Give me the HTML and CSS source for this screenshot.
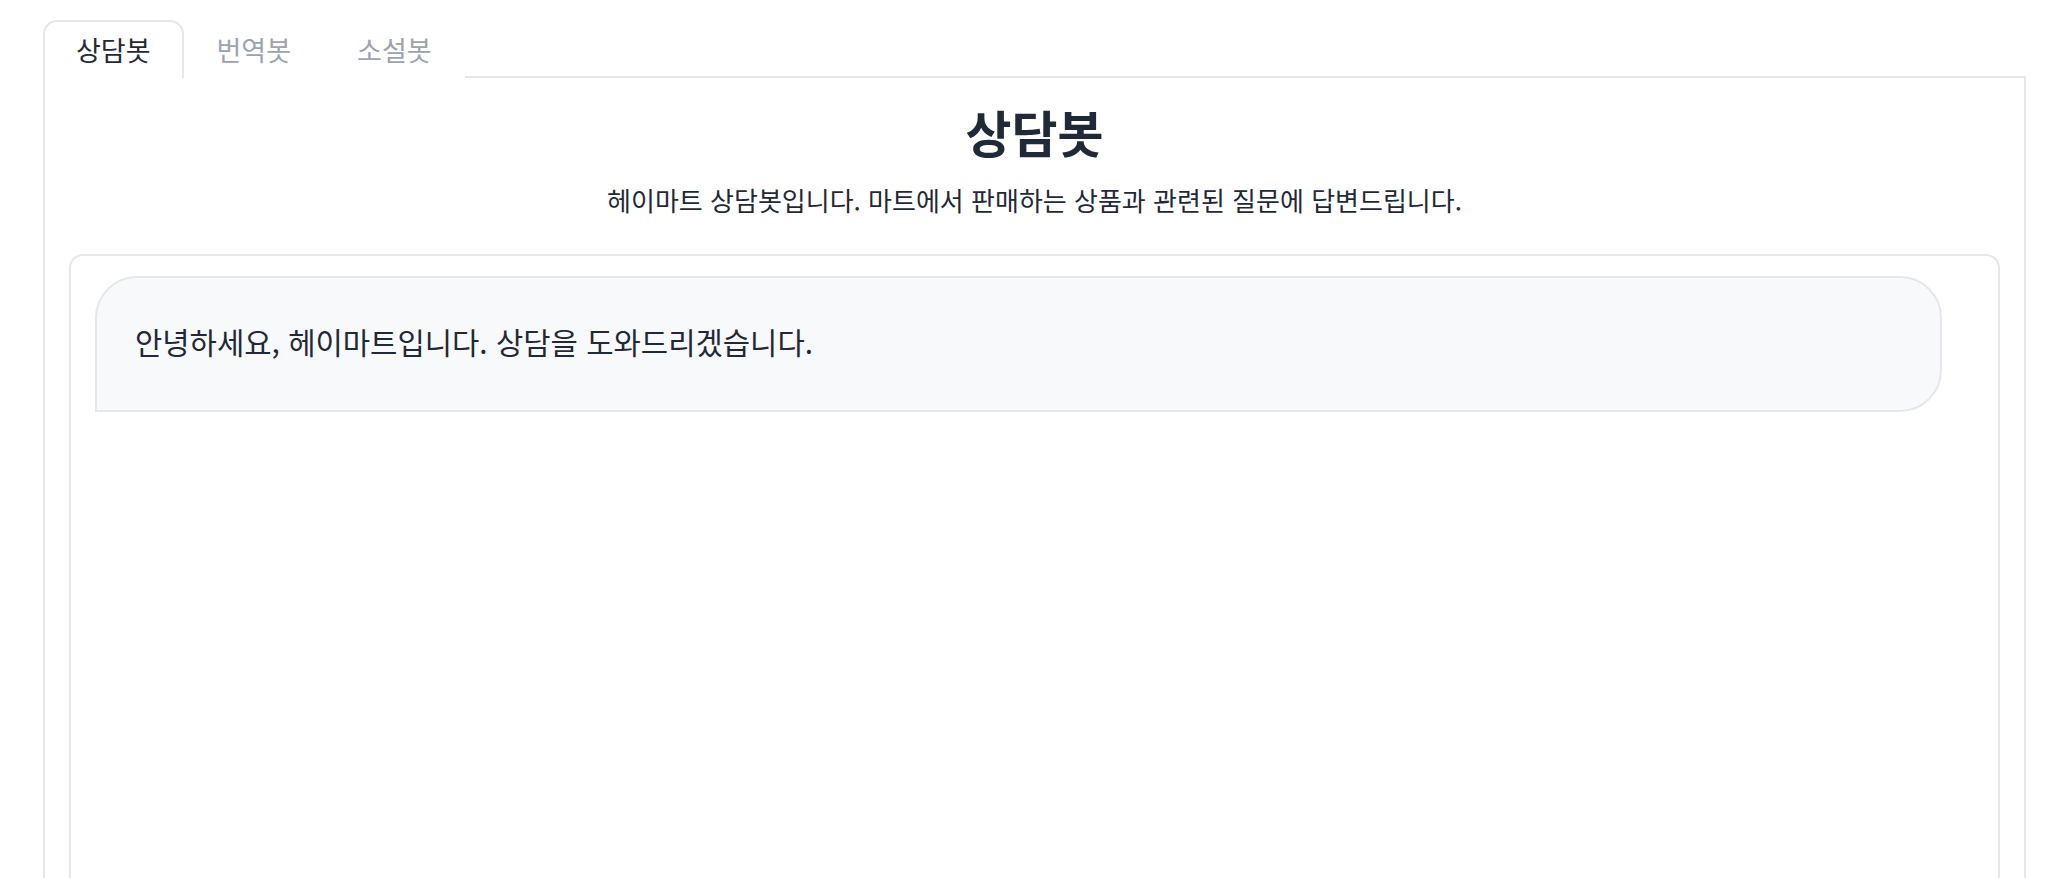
FILE: index.html
```html
<!DOCTYPE html>
<html lang="ko">

<head>
    <title>헤이마트 상담봇</title>
    <link rel="stylesheet" href="styles.css">
</head>

<body>
    <div class="page">
        <div class="tabs">
            <div class="tab active">상담봇</div>
            <div class="tab">번역봇</div>
            <div class="tab">소설봇</div>
        </div>

        <div class="panel">
            <h1 class="title">상담봇</h1>
            <p class="subtitle">헤이마트 상담봇입니다. 마트에서 판매하는 상품과 관련된 질문에 답변드립니다.</p>

            <div class="chat">
                <div class="bubble">안녕하세요, 헤이마트입니다. 상담을 도와드리겠습니다.</div>
            </div>
        </div>
    </div>
</body>
</html>
```

FILE: styles.css
```css
body {
    margin: 0;
    background-color: #ffffff;
    font-family: "Noto Sans CJK KR", "Noto Sans", sans-serif;
    color: #1f2937;
}

.page {
    padding: 20px 46px 0 43px;
}

.tabs {
    display: flex;
}

.tab {
    padding: 13px 31px;
    font-size: 27px;
    line-height: 30px;
    color: #9ca3af;
    border: 2px solid transparent;
    border-bottom: none;
    border-radius: 14px 14px 0 0;
    margin-bottom: -2px;
    background-color: #ffffff;
    position: relative;
}

.tab.active {
    color: #1f2937;
    border-color: #e5e7eb;
}

.panel {
    border: 2px solid #e5e7eb;
    border-bottom: none;
    padding: 21px 24px 0 24px;
}

.title {
    margin: 0;
    text-align: center;
    font-size: 50px;
    line-height: 64px;
    font-weight: 700;
}

.subtitle {
    margin: 19px 0 0 0;
    text-align: center;
    font-size: 26px;
    line-height: 36px;
}

.chat {
    margin-top: 36px;
    border: 2px solid #e5e7eb;
    border-radius: 14px;
    padding: 20px 56px 0 24px;
    height: 700px;
}

.bubble {
    background-color: #f8f9fb;
    border: 2px solid #e5e7eb;
    border-radius: 42px 42px 42px 0;
    padding: 43px 38px 47px 38px;
    font-size: 29.7px;
    line-height: 42px;
}
```
